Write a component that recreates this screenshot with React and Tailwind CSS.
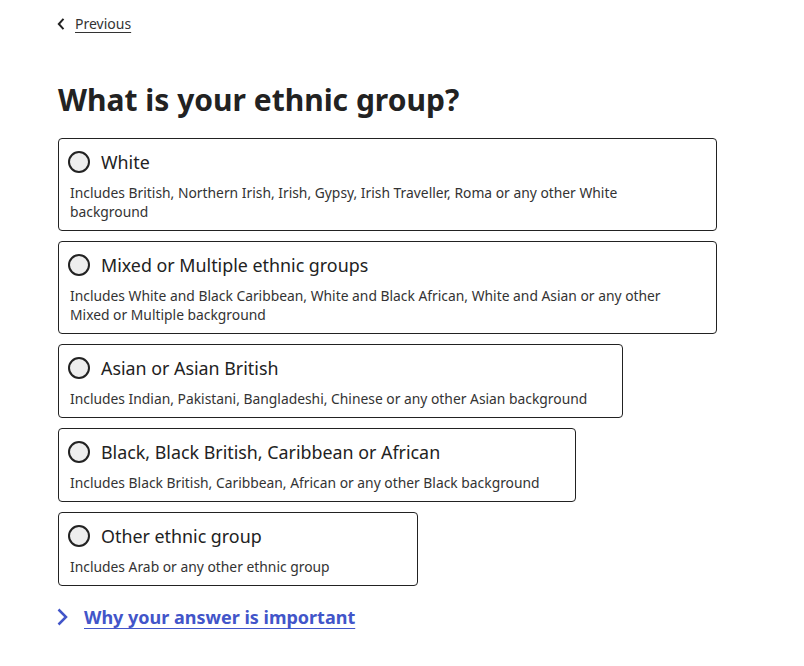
import React from 'react';

const options = [
    {
        label: 'White',
        hint: 'Includes British, Northern Irish, Irish, Gypsy, Irish Traveller, Roma or any other White background',
    },
    {
        label: 'Mixed or Multiple ethnic groups',
        hint: 'Includes White and Black Caribbean, White and Black African, White and Asian or any other Mixed or Multiple background',
    },
    {
        label: 'Asian or Asian British',
        hint: 'Includes Indian, Pakistani, Bangladeshi, Chinese or any other Asian background',
    },
    {
        label: 'Black, Black British, Caribbean or African',
        hint: 'Includes Black British, Caribbean, African or any other Black background',
    },
    {
        label: 'Other ethnic group',
        hint: 'Includes Arab or any other ethnic group',
    },
];

const RadioOption = ({ label, hint }) => (
    <label className="block w-fit min-w-[360px] max-w-[659px] border border-[#222222] rounded-[4px] pl-[9px] pr-[35px] pt-[11px] pb-[9px] cursor-pointer">
        <div className="flex items-center gap-[11px] h-[24px]">
            <span className="w-[22px] h-[22px] rounded-full border-2 border-[#222222] bg-[#eeeeee] shrink-0" />
            <span className="text-[17.85px] leading-[24px] text-[#222222]">{label}</span>
        </div>
        <p className="mt-[9px] pl-[2px] text-[13.85px] leading-[19px] text-[#333333]">{hint}</p>
    </label>
);

export default function App() {
    return (
        <div className="min-h-[666px] bg-white px-[58px] pt-[12px] font-['Noto_Sans',sans-serif]">
            <a href="#" className="inline-flex items-center gap-[10px] text-[14px] leading-[20px] text-[#333333]">
                <svg width="8" height="12" viewBox="0 0 8 12" fill="none" className="ml-[-1px]">
                    <path d="M6.5 0.8L1.8 6l4.7 5.2" stroke="#222222" strokeWidth="2" />
                </svg>
                <span className="underline underline-offset-[3px] decoration-[1px]">Previous</span>
            </a>

            <h1 className="mt-[45px] text-[30px] leading-[38px] font-bold text-[#222222]">What is your ethnic group?</h1>

            <div className="mt-[19px] flex flex-col gap-[10px]">
                {options.map((o) => (
                    <RadioOption key={o.label} label={o.label} hint={o.hint} />
                ))}
            </div>

            <a href="#" className="mt-[19px] inline-flex items-center gap-[15px] text-[18px] leading-[24px] font-bold text-[#4255c9]">
                <svg width="12" height="18" viewBox="0 0 12 18" fill="none" className="ml-[-1px]">
                    <path d="M1.5 1.5l7.5 7.5-7.5 7.5" stroke="#4255c9" strokeWidth="2.5" />
                </svg>
                <span className="underline underline-offset-[4px] decoration-[1px]">Why your answer is important</span>
            </a>
        </div>
    );
}
